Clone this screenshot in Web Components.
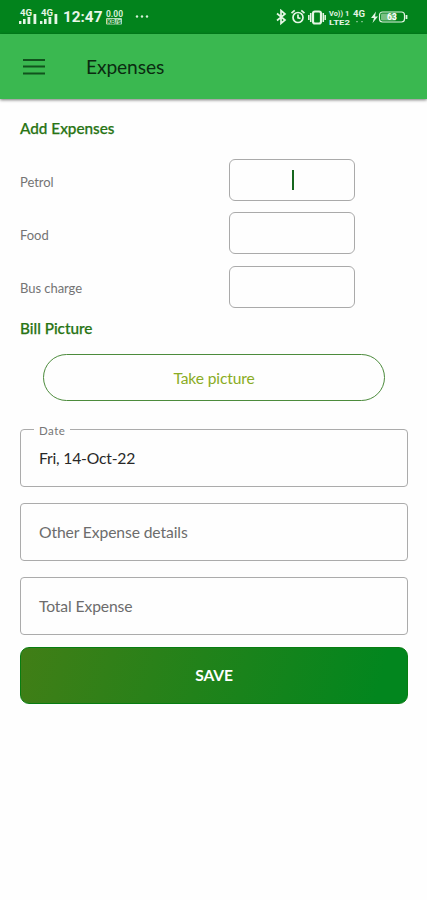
<!DOCTYPE html>
<html lang="en"><head><meta charset="utf-8"><title>Expenses</title>
<style>html,body{margin:0;height:100%;background:#fefefe;font-family:Lato,sans-serif}</style></head>
<body><expense-screen></expense-screen>
<script>
const define=(name,html)=>customElements.define(name,class extends HTMLElement{
  constructor(){super();const t=document.createElement('template');t.innerHTML=html;
  this.attachShadow({mode:'open'}).append(t.content.cloneNode(true));}
});
define('cell-signal',`<style>:host{display:block;width:19px;height:16px}svg{display:block}text{font:bold 9px Roboto,sans-serif}</style>
<svg width="19" height="16" fill="#e4f5e4"><text x="1" y="7" textLength="12" lengthAdjust="spacingAndGlyphs">4G</text><path d="M0 12h2.4v3H0zM4 10h2.6v5H4zM8.5 8h2.8v7H8.500zM14.500 5h2.800v10h-2.800z"/></svg>`);
define('status-bar',`<style>
:host{display:flex;align-items:flex-start;box-sizing:border-box;height:34px;padding:9px 16px 0 19px;background:#02831c;color:#e9f7e9}
cell-signal+cell-signal{margin-left:2px}
.time{font:bold 15.3px/17px Roboto,sans-serif;margin-left:4px;width:40px;white-space:nowrap}
.right{margin-left:auto}svg{display:block}.rate{margin-left:2px}.rate text,.right text{font-family:Roboto,sans-serif;font-weight:bold}
</style><cell-signal></cell-signal><cell-signal></cell-signal><span class="time">12:47</span>
<svg class="rate" width="50" height="17" fill="#d5efd7"><text x="1" y="7.500" font-size="8.5" textLength="17" lengthAdjust="spacingAndGlyphs">0.00</text><rect x="1" y="9" width="16" height="6.5" rx="1" fill="#b5dfba"/><text x="2" y="14.8" font-size="6.5" fill="#16852b" textLength="14" lengthAdjust="spacingAndGlyphs">KB/s</text><circle cx="32" cy="7.5" r="1.2"/><circle cx="37" cy="7.5" r="1.2"/><circle cx="42" cy="7.5" r="1.2"/></svg>
<svg class="right" width="136" height="18" fill="none" stroke="#e4f5e4" stroke-width="1.7">
<path d="M2 4.500l8 6.500-4 3.500V1.500L10 5l-8 6.500"/>
<circle cx="23" cy="8.5" r="5"/><path d="M23 5.5v3.300l2.500 .7M16.500 4.200l3.200-2.800M29.500 4.200l-3.200-2.800"/>
<rect x="38" y="2.500" width="8" height="12" rx="2" stroke-width="2.200"/><path d="M35.700 4v9M48.300 4v9M33.800 6v5M50.200 6v5" stroke-width="1.500"/>
<g fill="#e4f5e4" stroke="none"><text x="54" y="7" font-size="7.5" textLength="14" lengthAdjust="spacingAndGlyphs">Vo))</text><text x="70" y="7" font-size="7.5">1</text><text x="54" y="15.8" font-size="7.5" textLength="21" lengthAdjust="spacingAndGlyphs">LTE2</text><text x="78" y="8" font-size="8.5" textLength="12" lengthAdjust="spacingAndGlyphs">4G</text><path opacity=".5" d="M81 12h2v1.3h-2zM86 12h2v1.3h-2z"/><path d="M101 2.5L96 9h3l-1.5 5L103 7.5h-3z"/></g>
<rect x="104.5" y="3" width="25" height="10" rx="3" stroke-width="1.2"/><path d="M131.5 6v4" stroke-width="1.8"/><rect x="106" y="4.5" width="15" height="7" rx="1" fill="#79c083" stroke="none"/><text x="112" y="11.2" font-size="8.5" fill="#fff" stroke="none">63</text>
</svg>`);
define('app-bar',`<style>
:host{display:flex;align-items:center;box-sizing:border-box;height:65px;padding-left:23px;background:#3ab850;box-shadow:0 1px 3px #0008;color:#0b2b10}
svg{display:block;margin-right:41px}span{font-size:19.2px;line-height:24px;letter-spacing:-.1px;padding-top:1px}
</style><svg width="22" height="18" stroke="#11531d" stroke-width="1.800"><path d="M0 2h22M0 8.500h22M0 15.500h22"/></svg><span><slot></slot></span>`);
define('section-title',`<style>:host{display:block;position:relative;top:-.5px;font-size:15.3px;line-height:18px;font-weight:500;color:#287413;-webkit-text-stroke:.25px #287413}</style><slot></slot>`);
define('amount-row',`<style>
:host{display:flex;align-items:center;justify-content:space-between;height:42px;margin-bottom:11.4px;padding-right:53px;font-size:13px;color:#747474}
div{box-sizing:border-box;width:126px;height:42px;border:1.5px solid #aaa;border-radius:6px;display:flex;align-items:center;justify-content:center}
span{padding-top:3px;letter-spacing:-.05px}i{display:none;width:2px;height:20px;margin-left:2px;background:#17671e}:host([focused]) i{display:block}
</style><span><slot></slot></span><div><i></i></div>`);
define('picture-button',`<style>:host{display:flex;box-sizing:border-box;align-items:center;justify-content:center;width:342px;height:47px;border:1.3px solid #4c8b3c;border-radius:24px;color:#8aac24;font-size:15.6px;letter-spacing:-.12px}</style><slot></slot>`);
define('outlined-field',`<style>
:host{display:flex;position:relative;box-sizing:border-box;align-items:center;height:58px;border:1.3px solid #ababab;border-radius:4px;padding:0 18px;margin-bottom:16px;color:#6c6c6c;font-size:15.7px;letter-spacing:-.12px}
:host([filled]){color:#282828;letter-spacing:-.2px}
::slotted([slot=label]){position:absolute;top:-6px;left:13px;padding:0 5px;background:#fefefe;font-size:11.5px;line-height:14px;letter-spacing:.5px;color:#777}
</style><slot name="label"></slot><span><slot></slot></span>`);
define('save-button',`<style>:host{display:flex;box-sizing:border-box;align-items:center;justify-content:center;height:57px;border:1px solid #087d12;border-radius:9px;background:linear-gradient(105deg,#417e16,#02861e 92%);color:#fff;font-size:15.6px;font-weight:700;letter-spacing:-.1px;padding-bottom:2px}</style><slot></slot>`);
define('expense-screen',`<style>
:host{display:block;height:900px;overflow:hidden}main{padding:20px 19px 0 20px}
section-title:first-child{margin-bottom:22px}.bill{margin-bottom:17px}picture-button{margin:0 0 28px 23px}
.last{margin-bottom:12px}
</style><status-bar></status-bar><app-bar>Expenses</app-bar><main>
<section-title>Add Expenses</section-title>
<amount-row focused>Petrol</amount-row><amount-row>Food</amount-row><amount-row>Bus charge</amount-row>
<section-title class="bill">Bill Picture</section-title>
<picture-button>Take picture</picture-button>
<outlined-field filled><span slot="label">Date</span>Fri, 14-Oct-22</outlined-field>
<outlined-field>Other Expense details</outlined-field>
<outlined-field class="last">Total Expense</outlined-field>
<save-button>SAVE</save-button></main>`);
</script></body></html>
